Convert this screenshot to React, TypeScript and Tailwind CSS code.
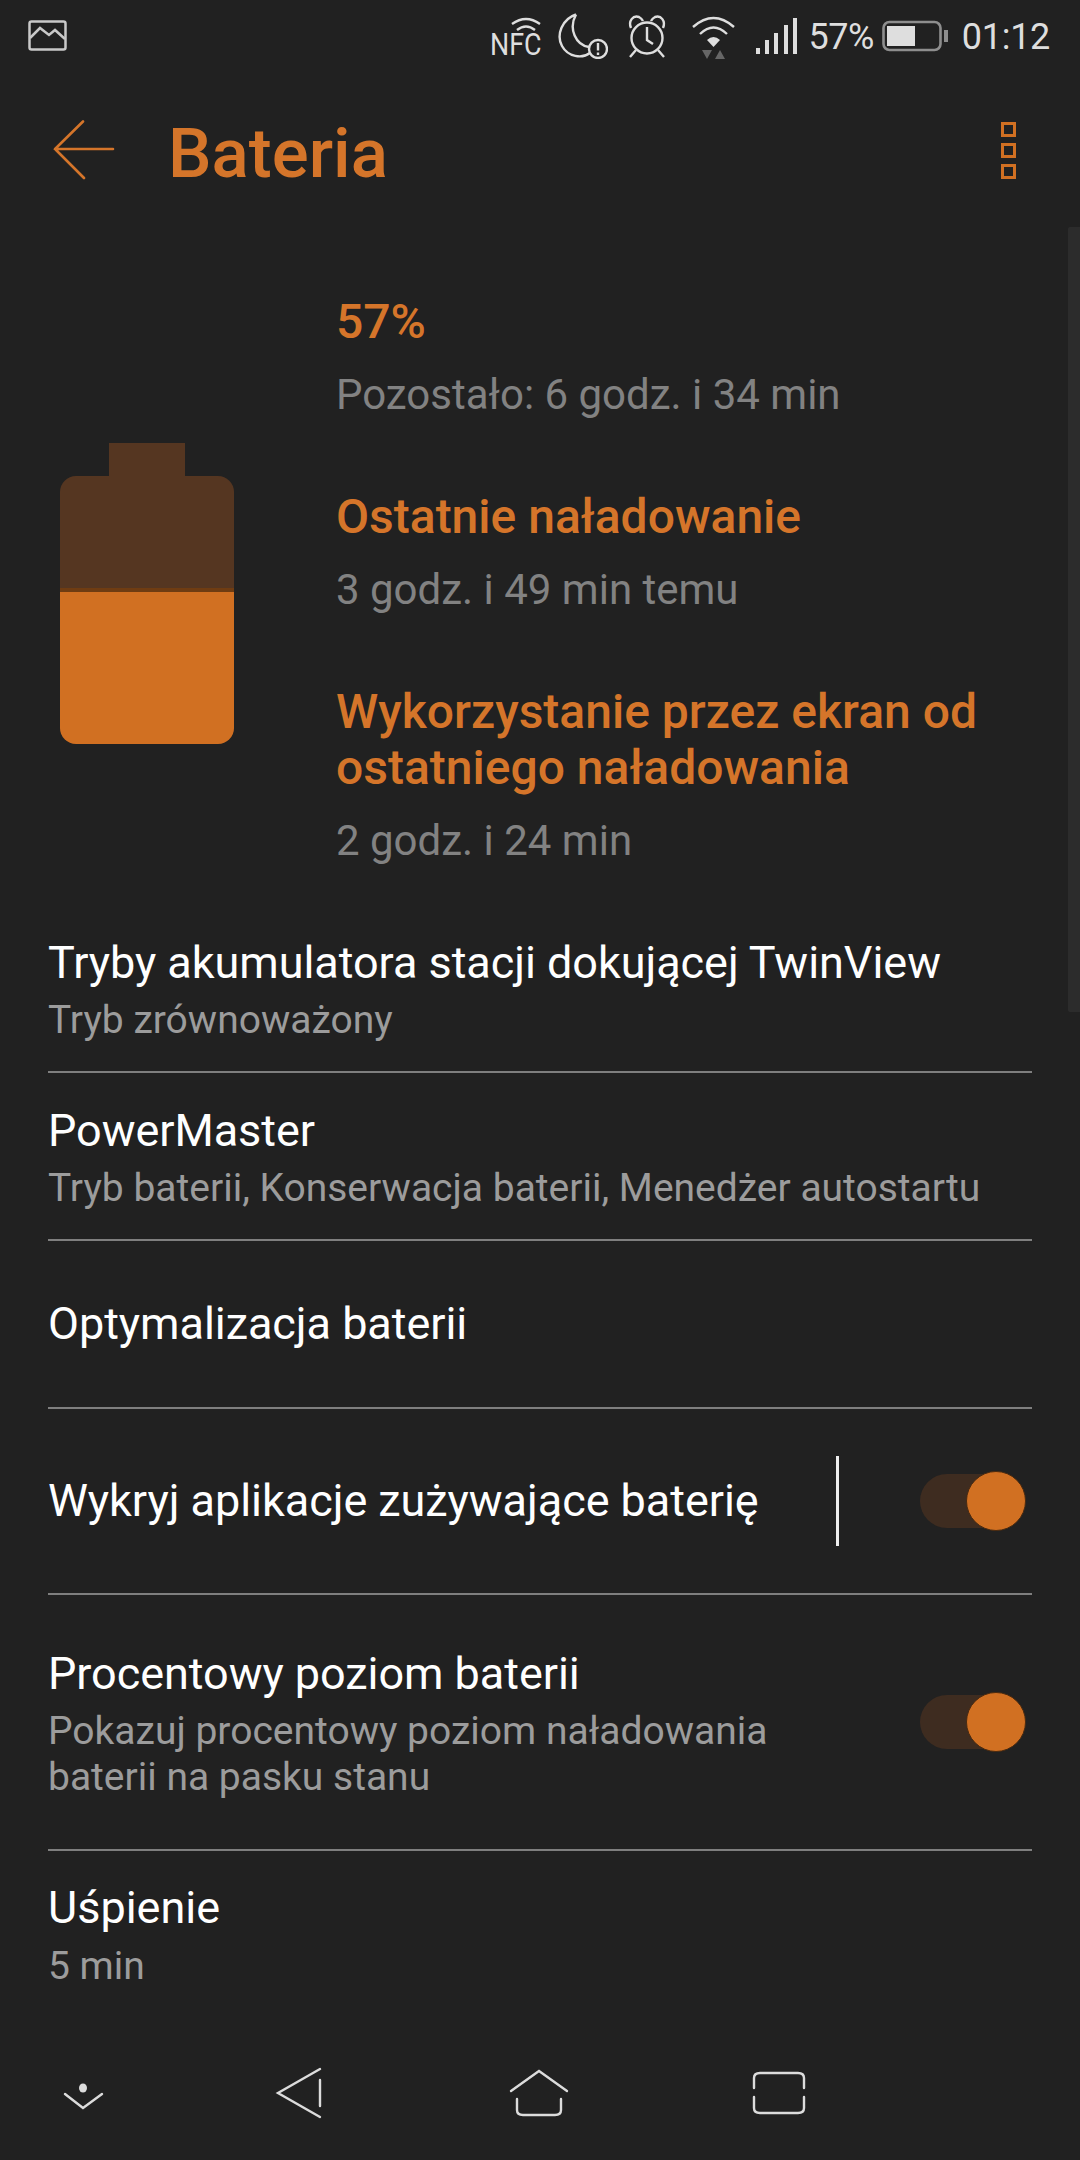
import React from "react";

const Toggle = () => (
  <div className="relative w-[100px] h-[54px] rounded-full bg-[#3e2c20] shrink-0 mr-[12px]">
    <div className="absolute right-[-6px] top-[-3px] w-[60px] h-[60px] rounded-full bg-[#d17022] border border-[#4a2a10]" />
  </div>
);

const Row = ({ title, sub, h, right }: { title: string; sub?: string[]; h: string; right?: React.ReactNode }) => (
  <div className={`flex items-center border-b-2 border-[#7f7f7f] ${h}`}>
    <div className="flex-1 min-w-0">
      <div className="text-[45px] leading-[60px] text-[#ffffff] tracking-[-0.05px] whitespace-nowrap">{title}</div>
      {sub && (
        <div className="mt-[4px] text-[39px] leading-[46px] text-[#9c9c9c] whitespace-nowrap">
          {sub.map((s) => (
            <div key={s}>{s}</div>
          ))}
        </div>
      )}
    </div>
    {right}
  </div>
);

const Group = ({ title, sub }: { title: string[]; sub: string }) => (
  <div>
    {title.map((t) => (
      <div key={t} className="text-[48px] leading-[56px] font-medium text-[#d5752a] whitespace-nowrap">
        {t}
      </div>
    ))}
    <div className="mt-[22px] text-[42px] leading-[46px] text-[#828282] whitespace-nowrap">{sub}</div>
  </div>
);

export default function App() {
  return (
    <div className="relative w-[1080px] h-[2160px] overflow-hidden bg-[#212121] font-['Roboto',sans-serif] flex flex-col">
      {/* status bar */}
      <div className="h-[72px] flex items-start text-[#dedede] shrink-0">
        <svg width="39" height="31" viewBox="0 0 39 31" className="ml-[28px] mt-[20px]" fill="none" stroke="#c9c9c9" strokeWidth="2.5">
          <rect x="1.5" y="1.5" width="36" height="28" rx="2" />
          <path d="M2 18 L12 8 L21 15 L27 10 L37 19" />
        </svg>
        <div className="ml-auto relative w-[51px] h-[44px] mt-[14px]">
          <svg width="30" height="14" viewBox="0 0 30 14" className="absolute left-[21px] top-[3px]" fill="none" stroke="#dedede" strokeWidth="2.4">
            <path d="M1 7 Q15 -3 29 7 M6 13 Q15 6 24 13" />
          </svg>
          <span className="absolute left-0 top-[15px] text-[32px] leading-[30px] scale-x-[0.84] origin-left text-[#dedede]">NFC</span>
        </div>
        <svg width="50" height="46" viewBox="0 0 50 46" className="ml-[17px] mt-[13px]" fill="none" stroke="#dedede" strokeWidth="2.4">
          <path d="M18 1.5 C4 6 -2 22 4 33 C10 44 24 46 32 40 M18 1.5 C10 16 18 32 31 34" />
          <circle cx="40" cy="36" r="9" fill="#212121" />
          <path d="M40 30 V37.5 M40 39.5 V42" />
        </svg>
        <svg width="40" height="44" viewBox="0 0 40 44" className="ml-[19px] mt-[14px]" fill="none" stroke="#dedede" strokeWidth="2.4">
          <circle cx="20" cy="24" r="15.5" />
          <path d="M20 13 V26 L26 30" />
          <path d="M4 14 C1 7 6 1 12 3 C14 4 15 5 16 7 M36 14 C39 7 34 1 28 3 C26 4 25 5 24 7" />
          <path d="M9 36 L3 43 M31 36 L37 43" />
        </svg>
        <svg width="43" height="44" viewBox="0 0 43 44" className="ml-[25px] mt-[15px]" fill="none" stroke="#dedede" strokeWidth="2.4">
          <path d="M1 12 Q21.5 -6 42 12 M8 19 Q21.5 6 35 19" />
          <path d="M15 25 Q21.5 19 28 25 L21.5 32 Z" fill="#dedede" stroke="none" />
          <path d="M10 35 H20 L15 44 Z M23 44 H33 L28 35 Z" fill="#666666" stroke="none" />
        </svg>
        <svg width="41" height="37" viewBox="0 0 41 37" className="ml-[21px] mt-[18px]" fill="#dedede">
          <rect x="0" y="30" width="4" height="6" />
          <rect x="9" y="22" width="4" height="14" />
          <rect x="18" y="15" width="4" height="21" />
          <rect x="28" y="7" width="4" height="29" />
          <rect x="37" y="0" width="4" height="36" />
        </svg>
        <span className="ml-[12px] mt-[16px] text-[36px] leading-[42px] tracking-[-0.5px]">57%</span>
        <svg width="66" height="32" viewBox="0 0 66 32" className="ml-[8px] mt-[20px]" fill="none">
          <rect x="1.5" y="2" width="57" height="28" rx="6" stroke="#8e8e8e" strokeWidth="2.6" />
          <rect x="5" y="6" width="28" height="20" fill="#dedede" />
          <rect x="62" y="10" width="4" height="12" fill="#8e8e8e" />
        </svg>
        <span className="ml-[14px] mr-[30px] mt-[16px] text-[36px] leading-[42px] tracking-[-0.3px]">01:12</span>
      </div>

      {/* header */}
      <div className="h-[156px] flex items-center shrink-0">
        <svg width="62" height="60" viewBox="0 0 62 60" className="ml-[53px]" fill="none" stroke="#d5752a" strokeWidth="2.6" strokeLinecap="round">
          <path d="M30 1.5 L2 29 L31 58 M2 29 H60" />
        </svg>
        <div className="ml-[53px] mt-[7px] text-[69px] leading-[76px] font-medium text-[#d5752a]">Bateria</div>
        <div className="ml-auto mr-[64px] flex flex-col gap-[6px]">
          <div className="w-[15px] h-[15px] border-[3px] border-[#d17022]" />
          <div className="w-[15px] h-[15px] border-[3px] border-[#d17022]" />
          <div className="w-[15px] h-[15px] border-[3px] border-[#d17022]" />
        </div>
      </div>

      {/* summary */}
      <div className="flex pt-[66px] pb-[41px] shrink-0">
        <div className="w-[336px] pl-[60px] pt-[149px] shrink-0">
          <div className="w-[174px]">
            <div className="w-[76px] h-[33px] mx-auto bg-[#553621]" />
            <div className="h-[268px] rounded-[16px] overflow-hidden flex flex-col">
              <div className="h-[116px] bg-[#553621] border-b-[4px] border-[#6f3c12]" />
              <div className="flex-1 bg-[#d17022]" />
            </div>
          </div>
        </div>
        <div className="flex flex-col gap-[71px]">
          <Group title={["57%"]} sub="Pozostało: 6 godz. i 34 min" />
          <Group title={["Ostatnie naładowanie"]} sub="3 godz. i 49 min temu" />
          <Group title={["Wykorzystanie przez ekran od", "ostatniego naładowania"]} sub="2 godz. i 24 min" />
        </div>
      </div>

      {/* settings list */}
      <div className="px-[48px]">
        <Row h="h-[168px]" title="Tryby akumulatora stacji dokującej TwinView" sub={["Tryb zrównoważony"]} />
        <Row h="h-[168px]" title="PowerMaster" sub={["Tryb baterii, Konserwacja baterii, Menedżer autostartu"]} />
        <Row h="h-[168px]" title="Optymalizacja baterii" />
        <Row
          h="h-[186px]"
          title="Wykryj aplikacje zużywające baterię"
          right={
            <>
              <div className="w-[3px] h-[90px] bg-[#eeeeee] mr-[81px]" />
              <Toggle />
            </>
          }
        />
        <Row
          h="h-[256px]"
          title="Procentowy poziom baterii"
          sub={["Pokazuj procentowy poziom naładowania", "baterii na pasku stanu"]}
          right={<Toggle />}
        />
        <div className="pt-[27px]">
          <div className="text-[45px] leading-[60px] text-[#ffffff]">Uśpienie</div>
          <div className="mt-[5px] text-[39px] leading-[46px] text-[#9c9c9c]">5 min</div>
        </div>
      </div>

      {/* scrollbar overlay */}
      <div className="absolute right-0 top-[227px] w-[12px] h-[785px] bg-[#2c2c2c] rounded-l-[2px]" />

      {/* nav bar */}
      <div className="absolute left-0 right-0 bottom-0 h-[100px]">
        <svg width="860" height="70" viewBox="0 2060 860 70" fill="none" stroke="#dcdcdc" strokeWidth="2.4" strokeLinecap="round">
          <ellipse cx="83" cy="2088" rx="4" ry="4.5" fill="#dcdcdc" stroke="none" />
          <path d="M65 2094 L83 2108 L102 2094" />
          <path d="M320 2069 L278 2093 L320 2117 M320 2080 V2106" />
          <path d="M511 2091 L539 2071 L567 2091 M517 2099 V2110 Q517 2115 523 2115 H555 Q561 2115 561 2110 V2099" />
          <path d="M754 2088 V2078 Q754 2073 760 2073 H798 Q804 2073 804 2078 V2088 M754 2097 V2108 Q754 2113 760 2113 H798 Q804 2113 804 2108 V2097" />
        </svg>
      </div>
    </div>
  );
}
